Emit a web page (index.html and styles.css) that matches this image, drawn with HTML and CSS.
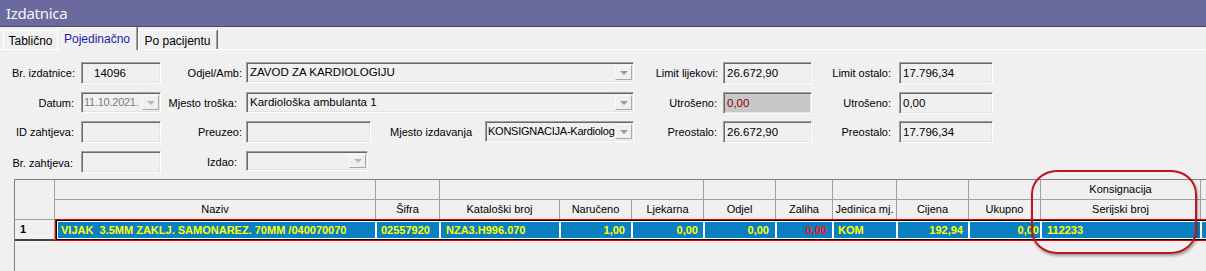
FILE: index.html
```html
<!DOCTYPE html>
<html lang="hr">
<head>
<meta charset="utf-8">
<title>Izdatnica</title>
<link rel="stylesheet" href="styles.css">
</head>
<body>
<div class="titlebar"><span class="title">Izdatnica</span></div>
<div class="tabs">
  <div class="tab tab-1">Tablično</div>
  <div class="tab tab-active">Pojedinačno</div>
  <div class="tab tab-3">Po pacijentu</div>
</div>
<div class="panel">
  <div class="form">
    <div class="row">
      <span class="lbl la pr6">Br. izdatnice:</span>
      <div class="fld w80 pl12">14096</div>
      <span class="lbl lb pr4">Odjel/Amb:</span>
      <div class="fld cmb w388"><span class="ctext">ZAVOD ZA KARDIOLOGIJU</span><span class="dd"></span></div>
      <span class="lbl lc pr5">Limit lijekovi:</span>
      <div class="fld w89">26.672,90</div>
      <span class="lbl ld pr8">Limit ostalo:</span>
      <div class="fld w94">17.796,34</div>
    </div>
    <div class="row">
      <span class="lbl la pr7">Datum:</span>
      <div class="fld cmb w80 disabled tight"><span class="ctext">11.10.2021.</span><span class="dd"></span></div>
      <span class="lbl lb pr9">Mjesto troška:</span>
      <div class="fld cmb w388"><span class="ctext">Kardiološka ambulanta 1</span><span class="dd"></span></div>
      <span class="lbl lc pr6">Utrošeno:</span>
      <div class="fld w89 gray">0,00</div>
      <span class="lbl ld pr8">Utrošeno:</span>
      <div class="fld w94">0,00</div>
    </div>
    <div class="row">
      <span class="lbl la pr7">ID zahtjeva:</span>
      <div class="fld w80"></div>
      <span class="lbl lb pr4">Preuzeo:</span>
      <div class="fld w125"></div>
      <span class="lbl le pr13">Mjesto izdavanja</span>
      <div class="fld cmb w149 tight"><span class="ctext">KONSIGNACIJA-Kardiolog</span><span class="dd"></span></div>
      <span class="lbl lc pr6">Preostalo:</span>
      <div class="fld w89">26.672,90</div>
      <span class="lbl ld pr8">Preostalo:</span>
      <div class="fld w94">17.796,34</div>
    </div>
    <div class="row">
      <span class="lbl la pr8 low">Br. zahtjeva:</span>
      <div class="fld w80"></div>
      <span class="lbl lb pr9">Izdao:</span>
      <div class="fld cmb w122 disabled short"><span class="ctext"></span><span class="dd"></span></div>
    </div>
  </div>

  <div class="grid">
    <div class="ghead">
      <div class="fixhead"></div>
      <div class="hcols">
        <div class="hrow">
          <div class="hc c-naz"></div>
          <div class="hc c-sif"></div>
          <div class="hc c-kat3"></div>
          <div class="hc c-72"></div>
          <div class="hc c-zal"></div>
          <div class="hc c-jed"></div>
          <div class="hc c-72"></div>
          <div class="hc c-72"></div>
          <div class="hc c-ser">Konsignacija</div>
          <div class="hc c-rest"></div>
        </div>
        <div class="hrow">
          <div class="hc c-naz">Naziv</div>
          <div class="hc c-sif">Šifra</div>
          <div class="hc c-kat">Kataloški broj</div>
          <div class="hc c-72">Naručeno</div>
          <div class="hc c-72">Ljekarna</div>
          <div class="hc c-72">Odjel</div>
          <div class="hc c-zal">Zaliha</div>
          <div class="hc c-jed">Jedinica mj.</div>
          <div class="hc c-72">Cijena</div>
          <div class="hc c-72">Ukupno</div>
          <div class="hc c-ser">Serijski broj</div>
          <div class="hc c-rest"></div>
        </div>
      </div>
    </div>
    <div class="drow">
      <div class="fixcell">1</div>
      <div class="selrow">
        <div class="dc d-naz">VIJAK&nbsp; 3.5MM ZAKLJ. SAMONAREZ. 70MM /040070070</div>
        <div class="dc c-sif">02557920</div>
        <div class="dc c-kat pl5">NZA3.H996.070</div>
        <div class="dc c-72 r pr6">1,00</div>
        <div class="dc c-72 r pr5">0,00</div>
        <div class="dc c-72 r pr6">0,00</div>
        <div class="dc c-zal r pr5 red">0,00</div>
        <div class="dc c-jed">KOM</div>
        <div class="dc c-72 r pr5">192,94</div>
        <div class="dc c-72 r pr0">0,00</div>
        <div class="dc c-ser pl5">112233</div>
        <div class="dc c-rest"></div>
      </div>
    </div>
  </div>
</div>
<div class="callout"></div>
</body>
</html>
```
FILE: styles.css
```css
* { box-sizing: border-box; }
html, body { margin: 0; padding: 0; }
body {
  width: 1206px;
  height: 271px;
  overflow: hidden;
  position: relative;
  background: #f0f0f0;
  font-family: "Liberation Sans", Arial, sans-serif;
  font-size: 11px;
  color: #000;
}

/* title bar */
.titlebar {
  height: 27px;
  background: #6b6a9e;
  border-bottom: 1px solid #4c4c58;
  display: flex;
  align-items: center;
  padding-left: 6px;
}
.title {
  color: #f6f6f6;
  font-family: "Noto Sans", "Open Sans", sans-serif;
  font-size: 15px;
  letter-spacing: -0.3px;
}

/* tabs */
.tabs {
  height: 23px;
  display: flex;
  align-items: flex-end;
  padding-left: 3px;
  border-bottom: 1px solid #ffffff;
}
.tab {
  height: 19px;
  background: #f0f0f0;
  border-top: 1px solid #ffffff;
  border-left: 1px solid #ffffff;
  border-right: 1px solid #a0a0a0;
  font-size: 12px;
  line-height: 20px;
  text-align: center;
  white-space: nowrap;
}
.tab-1 { width: 54px; border-right: none; }
.tab-active {
  width: 80px;
  height: 23px;
  margin-bottom: -1px;
  position: relative;
  z-index: 1;
  color: #1b1ba8;
  line-height: 22px;
  box-shadow: 1px 0 0 #696969;
}
.tab-3 { width: 79px; box-shadow: 1px 0 0 #696969; margin-left: 1px; }

/* form */
.panel { padding-top: 12px; }
.form {
  display: grid;
  grid-template-rows: 30px 29px 30px 28px;
}
.row { display: flex; align-items: flex-start; }
.lbl {
  flex: none;
  text-align: right;
  line-height: 22px;
  white-space: nowrap;
}
.la { width: 81px; }
.lb { width: 85px; }
.lc { width: 89px; }
.ld { width: 87px; }
.le { width: 114px; }
.pr4 { padding-right: 4px; }
.pr5 { padding-right: 5px; }
.pr6 { padding-right: 6px; }
.pr7 { padding-right: 7px; }
.pr8 { padding-right: 8px; }
.pr9 { padding-right: 9px; }
.pr13 { padding-right: 13px; }
.low { line-height: 24px; }

.fld {
  flex: none;
  height: 22px;
  border: 1px solid;
  border-color: #a0a0a0 #ffffff #ffffff #a0a0a0;
  box-shadow: inset 1px 1px 0 #696969, inset -1px -1px 0 #e3e3e3;
  padding-left: 3px;
  line-height: 20px;
  white-space: nowrap;
  overflow: hidden;
  font-size: 11.5px;
}
.pl12 { padding-left: 12px; }
.w80 { width: 80px; }
.w89 { width: 89px; }
.w94 { width: 94px; }
.w122 { width: 122px; }
.w125 { width: 125px; }
.w149 { width: 149px; }
.w388 { width: 388px; }
.gray { background: #c8c8c8; color: #8b0000; }

.cmb { display: flex; padding-right: 1px; height: 21px; }
.cmb.short { height: 20px; }
.cmb.tight { padding-left: 2px; font-size: 11px; }
.cmb.tight .ctext { letter-spacing: -0.25px; }
.ctext { flex: 1; min-width: 0; overflow: hidden; white-space: nowrap; line-height: 19px; }
.disabled .ctext { color: #7c7c7c; }
.dd {
  flex: none;
  width: 17px;
  margin: 2px 0 2px 0;
  background: #f0f0f0;
  border: 1px solid;
  border-color: #f8f8f8 #a8a8a8 #a8a8a8 #f8f8f8;
  display: flex;
  align-items: center;
  justify-content: center;
}
.dd::after {
  content: "";
  width: 0;
  height: 0;
  border-left: 4px solid transparent;
  border-right: 4px solid transparent;
  border-top: 4px solid #9a9a9a;
}
.disabled .dd::after { border-top-color: #b8b8b8; }

/* grid */
.grid {
  margin-left: 14px;
  height: 92px;
  border-left: 1px solid #808080;
  border-top: 1px solid #808080;
  overflow: hidden;
}
.ghead { display: flex; }
.fixhead {
  flex: none;
  width: 40px;
  height: 40px;
  border-right: 1px solid #a0a0a0;
  border-bottom: 1px solid #a0a0a0;
}
.hcols { flex: 1; min-width: 0; }
.hrow {
  display: flex;
  height: 20px;
  border-bottom: 1px solid #a0a0a0;
}
.hc {
  flex: none;
  border-right: 1px solid #a0a0a0;
  text-align: center;
  line-height: 19px;
  white-space: nowrap;
  overflow: hidden;
}
.c-naz { width: 321px; }
.c-sif { width: 64px; }
.c-kat { width: 120px; }
.c-kat3 { width: 264px; }
.c-72 { width: 72px; }
.c-zal { width: 57px; }
.c-jed { width: 64px; }
.c-ser { width: 160px; }
.c-rest { flex: 1; border-right: none; }

.drow { display: flex; align-items: flex-start; }
.fixcell {
  flex: none;
  width: 40px;
  height: 21px;
  border-right: 1px solid #a0a0a0;
  border-bottom: 2px solid #404040;
  font-weight: bold;
  padding-left: 5px;
  line-height: 18px;
}
.selrow {
  flex: 1;
  min-width: 0;
  display: flex;
  height: 22px;
  margin-top: -1px;
  border: 1px solid #e00000;
  border-right: none;
  padding: 1px 0 1px 1px;
  background: #000;
  overflow: hidden;
}
.dc {
  flex: none;
  height: 18px;
  background: #0a7fc2;
  border: 1px solid #ffffff;
  color: #ffff00;
  font-weight: bold;
  line-height: 16px;
  padding-left: 4px;
  white-space: nowrap;
  overflow: hidden;
}
.d-naz { width: 319px; padding-left: 3px; }
.dc.c-rest { border-right: none; }
.r { text-align: right; padding-left: 0; }
.dc.pr0 { padding-right: 1px; }
.dc.pr5 { padding-right: 5px; }
.dc.pr6 { padding-right: 6px; }
.pl5 { padding-left: 5px; }
.red { color: #ff1010; }

/* annotation */
.callout {
  position: absolute;
  left: 1031px;
  top: 170px;
  width: 166px;
  height: 84px;
  border: 2px solid #c0141c;
  border-radius: 26px / 24px;
  box-shadow: 1px 2px 3px rgba(0, 0, 0, 0.35);
}
```
